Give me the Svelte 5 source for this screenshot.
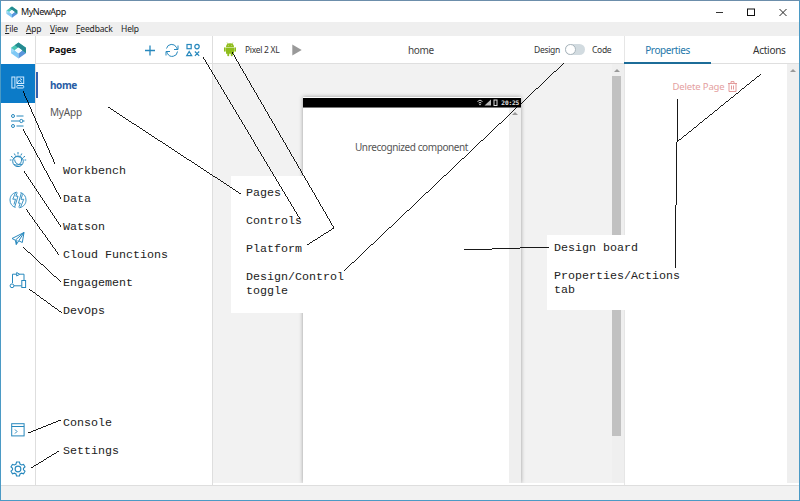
<script>
  const menus = [
    { key: 'F', rest: 'ile', x: 5 },
    { key: 'A', rest: 'pp', x: 26 },
    { key: 'V', rest: 'iew', x: 50 },
    { key: 'F', rest: 'eedback', x: 76 },
    { key: '', rest: 'Help', x: 121 }
  ];
  const lines = [
    '23,91 55,164',
    '23,129 61,199',
    '24,171 61,227',
    '26,209 59,255',
    '23,247 61,282',
    '29,289 62,313',
    '28,433 61,420',
    '31,468 59,451',
    '108,107 241,194',
    '203,57 300,219',
    '232,52 334,228 307,245',
    '564,63 344,271',
    '464,250 549,247',
    '677,99 677,142 675,268',
    '761,74 677,142'
  ];
  const notes = [
    { text: 'Workbench', x: 63, y: 164 },
    { text: 'Data', x: 63, y: 192 },
    { text: 'Watson', x: 63, y: 220 },
    { text: 'Cloud Functions', x: 63, y: 248 },
    { text: 'Engagement', x: 63, y: 276 },
    { text: 'DevOps', x: 63, y: 304 },
    { text: 'Console', x: 63, y: 416 },
    { text: 'Settings', x: 63, y: 444 }
  ];
</script>

{#snippet gem(size)}
  <svg class="gem" width={size} height={size} viewBox="0 0 16 16">
    <path d="M1 5.500 L8 10.500 V15.500 L1 10.500Z" fill="#80c9f6" />
    <path d="M15 5.500 L8 10.500 V15.500 L15 10.500Z" fill="#5a96dc" />
    <path d="M8 .5 L15 5.500 V10.300 L8 5.200 L1 10.300 V5.500Z" fill="#4ac5b4" />
    <path d="M8 .5 L15 5.500 V10.300 L4.500 3Z" fill="#258a91" />
    <path d="M1 5.500 L4.700 8 L1 10.500Z" fill="#9ed8fa" />
    <path d="M4.600 7.800 L8 5.200 L11.400 7.800 L8 10.500Z" fill="#f3fbff" />
  </svg>
{/snippet}

<div class="window">
  <header class="titlebar">
    {@render gem(12)}
    <span class="apptitle">MyNewApp</span>
    <svg class="winctl" width="74" height="12" viewBox="0 0 74 12">
      <path d="M1 6.500H8" stroke="#333" fill="none" />
      <rect x="32.500" y="3" width="7" height="6.500" stroke="#111" fill="none" />
      <path d="M64.500 3l7 7M71.500 3l-7 7" stroke="#222" fill="none" />
    </svg>
  </header>
  <nav class="menubar">
    {#each menus as m, i}
      <span style="width:{(menus[i + 1]?.x ?? 150) - m.x}px"><u>{m.key}</u>{m.rest}</span>
    {/each}
  </nav>

  <div class="work">
    <aside class="rail">
      <div class="brand">{@render gem(17)}</div>
      <div class="item active">
        <svg width="14" height="14" viewBox="0 0 14 14">
          <rect x=".9" y="1" width="3" height="11" /><rect x="5.900" y="1" width="6.800" height="6.500" />
          <rect x="5.900" y="9.500" width="6.800" height="2.500" rx=".6" /><path d="M6 7l2.500-3 2 2.500M9 2.500l2 1.500" />
        </svg>
      </div>
      <div class="item">
        <svg width="14" height="14" viewBox="0 0 14 14">
          <circle cx="2" cy="2" r="1.500" /><path d="M5.500 2H12.500M0 7H8.500M12 7h1.500M5.500 12h7" />
          <circle cx="10.300" cy="7" r="1.600" /><circle cx="2" cy="12" r="1.500" />
        </svg>
      </div>
      <div class="item">
        <svg width="18" height="18" viewBox="0 0 18 18">
          <circle cx="9" cy="10.300" r="5.300" /><path d="M4.200 8.500C6 4.200 11.800 5 13 8.700M5 13.500C10 15.500 13 12 12.500 7.500M5.700 8.500c0 4 4 6 7.500 4.700" />
          <path d="M5.300 2.500l1 2M9 1v2.400M12.800 2.500l-1 2M2 5.200l1.800 1.300M16 5.200l-1.800 1.300M.8 9h1.700M15.500 9h1.700" />
        </svg>
      </div>
      <div class="item">
        <svg width="18" height="18" viewBox="0 0 18 18" stroke-width=".9">
          <path d="M6.500 16.500C3 15.500 1 12.500 1 9s2-6.500 6-7.700c.8-.2 1.500.2 1 1L6.800 5.200H9L5.700 16M6.500 1.500L3.800 8.200H6.500L5 13.500" />
          <path d="M11.500 1.500C15 2.500 17 5.500 17 9s-2 6.500-6 7.700c-.8.2-1.300-.3-1-1l1.300-3.500H9.500L12.300 2M11.500 16.500l3.200-8.200H12l1.500-5" />
        </svg>
      </div>
      <div class="item">
        <svg width="16" height="16" viewBox="0 0 16 16">
          <path d="M2 7.500L14 1.500 12.300 11.500 8.800 9.800 6.300 13.500 5.300 9.200zM14 1.500L5.300 9.200M14 1.500L8.800 9.800M6.300 13.500l.6-4.500" />
        </svg>
      </div>
      <div class="item devops">
        <svg width="18" height="18" viewBox="0 0 18 18">
          <path d="M3.500 12V3.200h4M10.500 3.200h4.500V9M5 14.800h7.500M7.700 1.500l3 1.800-3 1.700z" />
          <circle cx="3" cy="14.800" r="1.900" /><rect x="12.800" y="9.500" width="3.800" height="7" />
        </svg>
      </div>
      <div class="grow"></div>
      <div class="item console">
        <svg width="14" height="14" viewBox="0 0 14 14">
          <rect x=".7" y=".7" width="12.400" height="12.200" /><path d="M.7 3.500h12.400M4 6.500l2 2-2 2" />
        </svg>
      </div>
      <div class="item gear">
        <svg width="16" height="16" viewBox="0 0 24 24" stroke-width="1.700">
          <path d="M9.800 1.500h4.400l.8 3.100 2.300 1.300 3-.9 2.200 3.800-2.300 2.100v2.300l2.300 2.100-2.200 3.800-3-.9-2.300 1.300-.8 3H9.800l-.8-3-2.300-1.300-3 .9-2.200-3.800 2.300-2.100v-2.300L1.500 8.800 3.700 5l3 .9L9 4.600z" />
          <circle cx="12" cy="12" r="4.300" />
        </svg>
      </div>
    </aside>

    <section class="pages">
      <div class="bar">
        <b>Pages</b>
        <svg width="58" height="16" viewBox="0 0 58 16" class="blue">
          <path d="M1 8.500H11M6 3.500v10" stroke-width="1.300" />
          <path d="M22.500 6.500A5.300 5.300 0 0 1 32.500 5.500L33.500 7.500M34 3.500v4h-4M33.500 9.500A5.300 5.300 0 0 1 23.500 11.500L22.500 9.500M22 13.500V9.500H26" />
          <g stroke-width="1.200"><rect x="43" y="2.500" width="4.200" height="4.200" /><circle cx="53" cy="4.600" r="2.200" />
          <path d="M45.200 9.500L47.700 13.700H42.700zM50.900 9.500l4.300 4.300M55.200 9.500L50.900 13.800" /></g>
        </svg>
      </div>
      <div class="page sel">home</div>
      <div class="page">MyApp</div>
    </section>

    <main class="center">
      <div class="bar">
        <svg width="14" height="15" viewBox="0 0 14 15" class="droid">
          <path d="M3 5a4 3.800 0 0 1 8 0zM3 5.500h8v6.200H3z" /><path d="M4 .5l1.300 2M10 .5l-1.300 2" stroke="#8fbd1c" stroke-width=".6" />
          <rect x="1" y="5.300" width="1.700" height="4.500" rx=".8" /><rect x="11.300" y="5.300" width="1.700" height="4.500" rx=".8" />
          <rect x="4.300" y="10" width="1.900" height="4.300" rx=".8" /><rect x="7.800" y="10" width="1.900" height="4.300" rx=".8" />
          <circle cx="5.300" cy="3.200" r=".4" fill="#fff" /><circle cx="8.700" cy="3.200" r=".4" fill="#fff" />
        </svg>
        <span class="device">Pixel 2 XL</span>
        <svg class="play" width="10" height="12" viewBox="0 0 10 12"><path d="M.3.500L9.700 6 .3 11.500z" fill="#999" /></svg>
        <span class="name">home</span>
        <span class="mode">Design</span>
        <span class="toggle"><i></i></span>
        <span class="mode">Code</span>
      </div>
      <div class="canvas">
        <div class="board">
          <div class="phone">
            <div class="status">
              <svg width="24" height="9" viewBox="0 0 24 9">
                <path d="M1.500 3.500Q4 .8 6.500 3.500M2.700 5Q4 3.700 5.300 5" fill="none" stroke="#ccc" /><circle cx="4" cy="6.500" r=".8" fill="#ddd" />
                <path d="M8.500 7.500H15V1.500z" fill="#bbb" /><rect x="18" y="2" width="3" height="5.500" fill="none" stroke="#ddd" />
              </svg>
              <span>20:25</span>
            </div>
            <div class="screen">
              <div class="msg">Unrecognized component</div>
              <div class="scroll inner"><i class="up"></i></div>
            </div>
          </div>
        </div>
        <div class="scroll main"><i class="up"></i><div class="thumb"></div></div>
      </div>
    </main>

    <section class="props">
      <div class="tabs"><span class="tab on">Properties</span><span class="tab second">Actions</span></div>
      <div class="pbody">
        <div class="delete">
          <span>Delete Page</span>
          <svg width="9" height="11" viewBox="0 0 9 11"><path d="M0 2.500h9M3 2V.6h3V2M1 2.500v8h7v-8M3.500 4.500v4M5.500 4.500v4" fill="none" stroke="#e09090" stroke-width=".9" /></svg>
        </div>
        <div class="scroll"><i class="up"></i></div>
      </div>
    </section>
  </div>
  <footer></footer>

  <div class="card left">
    <p>Pages</p><p>Controls</p><p>Platform</p><p>Design/Control<br />toggle</p>
  </div>
  <div class="card right">
    <p>Design board</p><p>Properties/Actions<br />tab</p>
  </div>
  {#each notes as n}
    <span class="note" style="left:{n.x}px;top:{n.y}px">{n.text}</span>
  {/each}
  <svg class="lines" width="800" height="501" viewBox="0 0 800 501">
    {#each lines as p}
      <polyline points={p} />
    {/each}
  </svg>
</div>

<style>
  .window { position: relative; box-sizing: border-box; width: 800px; height: 501px; overflow: hidden; display: flex; flex-direction: column; background: #fff; border: 1px solid #4b9ac5; border-top-color: #6c8eab; font-family: "Noto Sans", "Open Sans", sans-serif; color: #333; }
  svg { display: block; flex: none; }
  .titlebar { height: 21px; flex: none; display: flex; align-items: center; padding-left: 5px; }
  .apptitle { margin-left: 3px; font-size: 9px; letter-spacing: -.45px; color: #111; flex: 1; }
  .winctl { margin-right: 10px; }
  .menubar { height: 14px; flex: none; background: #efefef; display: flex; padding-left: 4px; font-size: 8.500px; letter-spacing: -.15px; line-height: 14px; color: #222; }
  .menubar span { white-space: nowrap; }
  .menubar u { text-underline-offset: 1px; }
  .work { height: 449px; flex: none; display: flex; }
  .rail { width: 34px; border-right: 1px solid #dedede; display: flex; flex-direction: column; }
  .brand { height: 28px; display: flex; align-items: center; justify-content: center; flex: none; }
  .item { box-sizing: border-box; height: 39.300px; flex: none; display: flex; align-items: center; justify-content: center; padding-bottom: 3px; }
  .item svg { fill: none; stroke: #2788bd; }
  .item.active { height: 39px; background: #0c7bc8; padding-bottom: 2px; }
  .item.active svg { stroke: #d3ecff; }
  .item.devops, .item.console { padding-bottom: 0; }
  .grow { flex: 1; }
  .item.gear { margin-bottom: -4px; padding-bottom: 0; }
  .pages { width: 176px; border-right: 1px solid #dedede; }
  .bar { box-sizing: border-box; height: 28px; display: flex; align-items: center; border-bottom: 1px solid #dfdfdf; }
  .pages .bar { padding: 0 10px 0 13px; justify-content: space-between; font-size: 9.500px; letter-spacing: -.2px; color: #111; }
  .blue { fill: none; stroke: #2788bd; }
  .page { padding-left: 14px; height: 27px; line-height: 28px; font-size: 10px; letter-spacing: -.2px; color: #555; }
  .page.sel { margin-top: 8px; height: 26px; line-height: 27px; padding-left: 12px; border-left: 2px solid #315fae; color: #285da5; font-weight: 700; letter-spacing: -.4px; }
  .center { width: 411px; }
  .center .bar { padding-left: 10px; font-size: 8.500px; }
  .center .bar > * { flex: none; }
  .droid { fill: #8fbd1c; }
  .device { margin-left: 8px; width: 47px; white-space: nowrap; letter-spacing: -.3px; }
  .name { width: 26px; margin-left: 106px; margin-right: 100px; font-size: 10px; letter-spacing: -.35px; color: #444; }
  .mode { color: #333; letter-spacing: -.3px; width: 26px; }
  .toggle { width: 20px; height: 11px; border-radius: 6px; background: #d2dbe0; margin: 0 7px 0 5px; }
  .toggle i { display: block; box-sizing: border-box; width: 11px; height: 11px; border: 1px solid #aab6bd; border-radius: 50%; background: #fff; }
  .canvas { height: 419px; display: flex; background: #f2f2f2; }
  .board { flex: 1; overflow: hidden; padding: 33px 0 0 90px; }
  .phone { width: 218px; height: 386px; background: #fff; box-shadow: 0 0 4px #999; display: flex; flex-direction: column; }
  .status { margin-top: 1px; height: 9px; background: #000; display: flex; justify-content: flex-end; align-items: center; gap: 1px; color: #e4e4e4; font: bold 6.200px "DejaVu Sans Mono", monospace; letter-spacing: -.2px; padding-right: 2px; border-bottom: 1px solid #777; }
  .screen { flex: 1; display: flex; }
  .msg { flex: 1; text-align: center; padding: 32px 0 0 11px; font-size: 10px; letter-spacing: -.4px; line-height: 15px; color: #555; }
  .scroll { width: 12px; background: #efefef; }
  .up { display: block; width: 0; margin: 5px auto 4px; border: 3px solid transparent; border-top: 0; border-bottom: 3px solid #999; }
  .inner .up { margin-top: 4px; }
  .scroll.main { width: 12px; }
  .main .up { margin-left: 2px; }
  .thumb { width: 9px; height: 360px; background: #c1c1c1; }
  .props { flex: 1; display: flex; flex-direction: column; border-left: 1px solid #e6e6e6; box-sizing: border-box; }
  .tabs { box-sizing: border-box; height: 28px; display: flex; border-bottom: 1px solid #dfdfdf; font-size: 10px; letter-spacing: -.4px; line-height: 28px; }
  .tab.on { box-sizing: border-box; width: 87px; height: 28px; text-align: center; color: #2577aa; border-bottom: 2px solid #1c6c98; margin-left: -1px; }
  .second { margin-left: 42px; color: #333; letter-spacing: -.25px; }
  .pbody { height: 419px; display: flex; }
  .delete { flex: 1; display: flex; gap: 3px; justify-content: center; padding: 17px 3px 0 0; font-size: 9.500px; letter-spacing: -.15px; line-height: 11px; color: #e4a0a0; }
  footer { flex: 1; background: #f2f2f2; border-top: 1px solid #dedede; }
  .card, .note { position: absolute; font: 11.670px/14px "Liberation Mono", monospace; color: #222; white-space: nowrap; }
  .note { margin: -1px 0 0 -1px; }
  .card { background: #fff; box-sizing: border-box; }
  .card p { margin: 0 0 14px; }
  .card.left { left: 230px; top: 175px; width: 118px; height: 137px; padding: 10px 0 0 15px; }
  .card.right { left: 546px; top: 234px; width: 137px; height: 75px; padding: 6px 0 0 7px; }
  .lines { position: absolute; left: -1px; top: -1px; fill: none; stroke: #000; stroke-width: .9; shape-rendering: crispEdges; }
</style>
